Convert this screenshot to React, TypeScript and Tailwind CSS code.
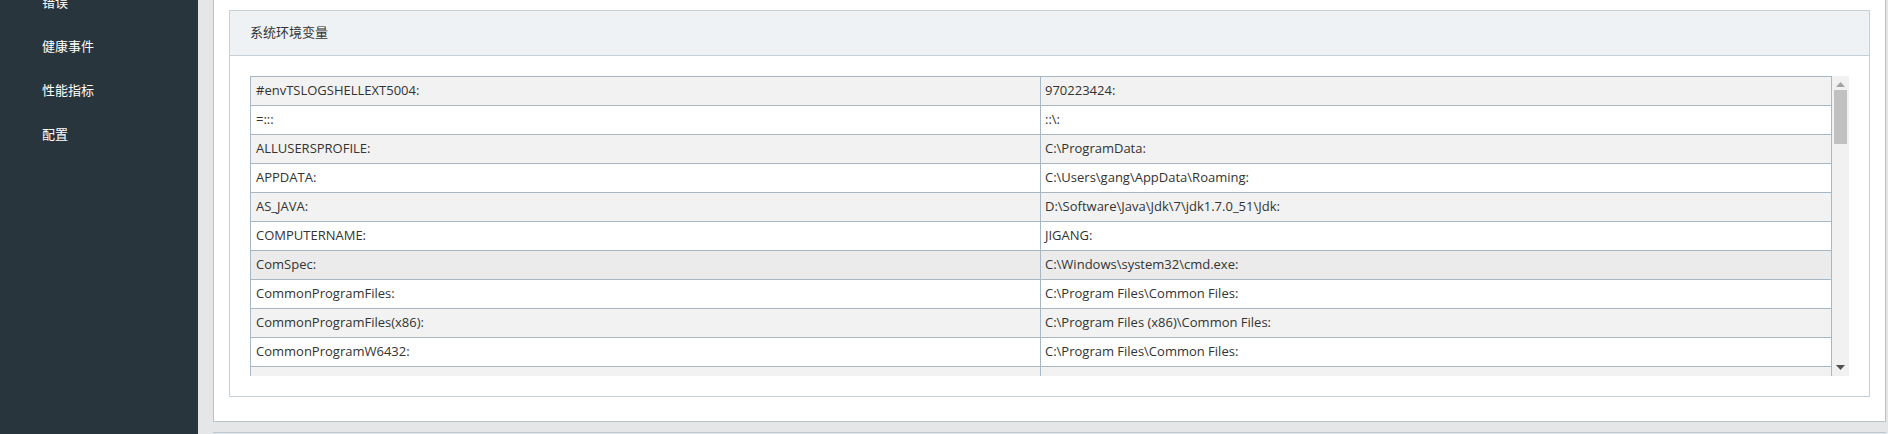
import React from "react";

const menu = ["错误", "健康事件", "性能指标", "配置"];

const rows: [string, string][] = [
  ["#envTSLOGSHELLEXT5004:", "970223424:"],
  ["=:::", "::\\:"],
  ["ALLUSERSPROFILE:", "C:\\ProgramData:"],
  ["APPDATA:", "C:\\Users\\gang\\AppData\\Roaming:"],
  ["AS_JAVA:", "D:\\Software\\Java\\Jdk\\7\\jdk1.7.0_51\\Jdk:"],
  ["COMPUTERNAME:", "JIGANG:"],
  ["ComSpec:", "C:\\Windows\\system32\\cmd.exe:"],
  ["CommonProgramFiles:", "C:\\Program Files\\Common Files:"],
  ["CommonProgramFiles(x86):", "C:\\Program Files (x86)\\Common Files:"],
  ["CommonProgramW6432:", "C:\\Program Files\\Common Files:"],
  ["", ""],
];

function Scrollbar() {
  return (
    <div className="flex w-[17px] shrink-0 flex-col items-center bg-[#f1f1f1]">
      <svg className="mt-[6px]" width="9" height="5" viewBox="0 0 9 5">
        <polygon points="4.5,0 9,5 0,5" fill="#a3a3a3" />
      </svg>
      <div className="mt-[3px] h-[54px] w-[13px] bg-[#c1c1c1]" />
      <div className="flex-1" />
      <svg className="mb-[6px]" width="9" height="5" viewBox="0 0 9 5">
        <polygon points="0,0 9,0 4.5,5" fill="#505050" />
      </svg>
    </div>
  );
}

export default function App() {
  return (
    <div
      className="flex h-[434px] w-full overflow-hidden text-[13px] text-[#333]"
      style={{ fontFamily: '"Open Sans", "Noto Sans CJK SC", sans-serif' }}
    >
      <aside className="w-[198px] shrink-0 bg-[#29353d]">
        <ul className="mt-[-19px]">
          {menu.map((m) => (
            <li key={m} className="flex h-[44px] items-center pl-[42px] text-white">
              {m}
            </li>
          ))}
        </ul>
      </aside>

      <main className="flex flex-1 flex-col bg-[#e4e6e8] pl-[15px] pr-[2px]">
        <div className="h-[422px] shrink-0 border border-t-0 border-[#b7c3cb] bg-white px-[15px] pt-[10px]">
          <section className="border border-[#c5d0d8]">
            <header className="flex h-[45px] items-center border-b border-[#c5d0d8] bg-[#eff2f5] pl-[20px]">
              系统环境变量
            </header>
            <div className="p-[20px]">
              <div className="flex h-[300px] overflow-hidden">
                <div className="flex-1 overflow-hidden border-l border-t border-r border-[#a7b7c3]">
                  {rows.map(([k, v], i) => (
                    <div
                      key={i}
                      className={`flex h-[29px] border-b border-[#a7b7c3] ${
                        i === 6 ? "bg-[#ebebeb]" : i % 2 === 0 ? "bg-[#f2f2f2]" : "bg-white"
                      }`}
                    >
                      <div className="flex w-[790px] shrink-0 items-center border-r border-[#a7b7c3] pl-[5px]">
                        {k}
                      </div>
                      <div className="flex flex-1 items-center pl-[4px]">{v}</div>
                    </div>
                  ))}
                </div>
                <Scrollbar />
              </div>
            </div>
          </section>
        </div>
        <div className="h-[10px] shrink-0" />
        <div className="h-px shrink-0 bg-[#b9c9d5]" />
      </main>
    </div>
  );
}
